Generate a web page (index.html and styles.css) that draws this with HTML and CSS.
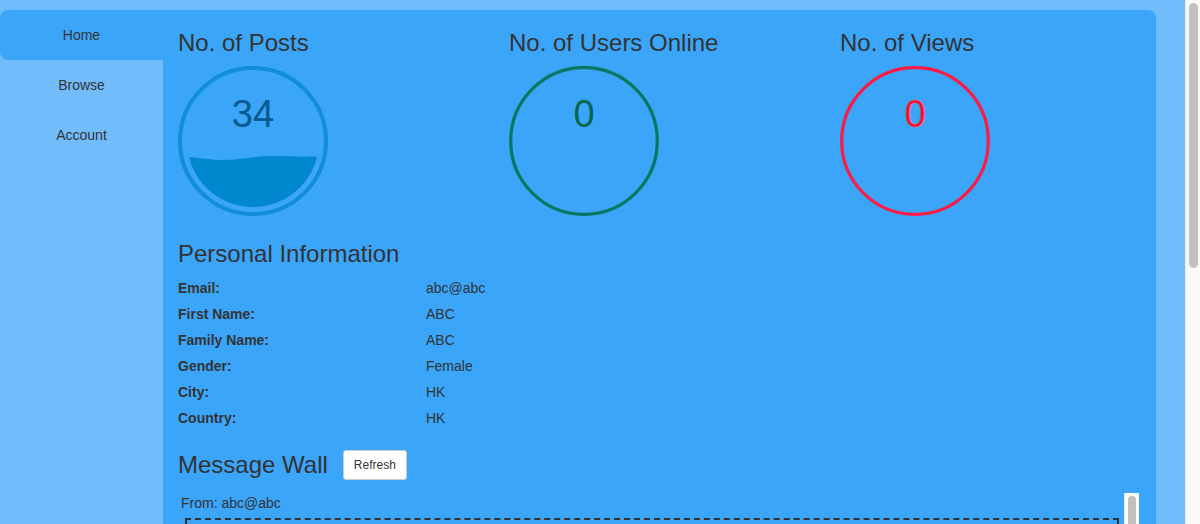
FILE: index.html
```html
<!DOCTYPE html>
<html lang="en">
<head>
<meta charset="utf-8">
<title>Dashboard</title>
<link rel="stylesheet" href="styles.css">
</head>
<body>
<div class="layout">
  <nav class="sidebar">
    <a class="nav-item active">Home</a>
    <a class="nav-item">Browse</a>
    <a class="nav-item">Account</a>
  </nav>
  <main class="panel">
    <section class="stats">
      <div class="stat">
        <h3 class="title">No. of Posts</h3>
        <svg class="gauge" width="150" height="150" viewBox="0 0 150 150">
          <defs>
            <clipPath id="inner"><circle cx="75" cy="75" r="66"/></clipPath>
          </defs>
          <circle cx="75" cy="75" r="73" fill="none" stroke="#118ed6" stroke-width="4"/>
          <path clip-path="url(#inner)" fill="#0087ce" d="M0,91 C15,90 30,94 45,94 C62,94 78,90 95,90 C115,90 130,91 150,91 L150,150 L0,150 Z"/>
          <text x="75" y="61" class="gauge-text posts">34</text>
        </svg>
      </div>
      <div class="stat">
        <h3 class="title">No. of Users Online</h3>
        <svg class="gauge" width="150" height="150" viewBox="0 0 150 150">
          <circle cx="75" cy="75" r="73.3" fill="none" stroke="#06775e" stroke-width="3.2"/>
          <text x="75" y="61" class="gauge-text users">0</text>
        </svg>
      </div>
      <div class="stat">
        <h3 class="title">No. of Views</h3>
        <svg class="gauge" width="150" height="150" viewBox="0 0 150 150">
          <circle cx="75" cy="75" r="73.3" fill="none" stroke="#fd1a44" stroke-width="3.2"/>
          <text x="75" y="61" class="gauge-text views">0</text>
        </svg>
      </div>
    </section>

    <section class="info">
      <h3 class="title">Personal Information</h3>
      <div class="info-grid">
        <div class="label">Email:</div><div class="value">abc@abc</div>
        <div class="label">First Name:</div><div class="value">ABC</div>
        <div class="label">Family Name:</div><div class="value">ABC</div>
        <div class="label">Gender:</div><div class="value">Female</div>
        <div class="label">City:</div><div class="value">HK</div>
        <div class="label">Country:</div><div class="value">HK</div>
      </div>
    </section>

    <section class="wall">
      <div class="wall-head">
        <h3 class="title">Message Wall</h3>
        <button class="btn">Refresh</button>
      </div>
      <div class="wall-scroll">
        <div class="wall-content">
          <div class="from">From: abc@abc</div>
          <div class="message"></div>
        </div>
        <div class="scrollbar inner-bar"><div class="thumb inner-thumb"></div></div>
      </div>
    </section>
  </main>
</div>
<div class="scrollbar page-bar"><div class="thumb page-thumb"></div></div>
</body>
</html>
```

FILE: styles.css
```css
html {
  scrollbar-width: none;
}

body {
  margin: 0;
  background: #71bcfb;
  font-family: "Liberation Sans", Arial, Helvetica, sans-serif;
  font-size: 14px;
  line-height: 20px;
  color: #333;
}

.layout {
  display: flex;
  width: 1156px;
  margin-top: 10px;
}

.sidebar {
  width: 163px;
  flex: none;
  display: flex;
  flex-direction: column;
}

.nav-item {
  display: block;
  height: 50px;
  line-height: 50px;
  text-align: center;
  color: #333;
  font-size: 14px;
  cursor: pointer;
}

.nav-item.active {
  background: #3aa5f9;
  border-radius: 8px 0 0 8px;
}

.panel {
  flex: 1;
  background: #3aa5f9;
  border-radius: 0 8px 0 0;
  padding: 0 0 24px;
}

.title {
  margin: 20px 0 10px;
  font-size: 24px;
  font-weight: normal;
  line-height: 1.1;
  color: #333;
}

.stats {
  display: grid;
  grid-template-columns: repeat(3, 1fr);
}

.stat {
  padding: 0 15px;
}

.gauge {
  display: block;
}

.gauge-text {
  font-family: "Liberation Sans", Arial, sans-serif;
  font-size: 38px;
  text-anchor: middle;
}

.gauge-text.posts { fill: #045a8c; }
.gauge-text.users { fill: #05664f; }
.gauge-text.views { fill: #ff0a1e; stroke: #ff5c8a; stroke-width: 0.4; }

.info {
  padding: 0 15px;
  margin-top: 25px;
}

.info-grid {
  display: grid;
  grid-template-columns: 248px 1fr;
}

.label,
.value {
  padding: 0 0 6px;
  line-height: 20px;
}

.label {
  font-weight: bold;
}

.wall {
  padding: 0 15px;
}

.wall-head {
  display: flex;
  align-items: center;
  gap: 15px;
  margin-top: 16px;
}

.wall-head .title {
  margin: 0;
}

.btn {
  font-family: "Liberation Sans", Arial, sans-serif;
  font-size: 12px;
  line-height: 18px;
  padding: 5px 10px;
  background: #fff;
  color: #333;
  border: 1px solid #ccc;
  border-radius: 3px;
}

.wall-scroll {
  position: relative;
  margin-top: 13px;
  width: 961px;
  height: 520px;
  overflow: hidden;
}

.wall-content {
  padding: 0 15px 0 3px;
}

.from {
  line-height: 20px;
}

.message {
  margin: 5px 5px 0 4px;
  height: 640px;
  border: 2px dashed #333;
}

.scrollbar {
  background: #fafafa;
  border-left: 1px solid #ececec;
  box-sizing: border-box;
  width: 15px;
}

.thumb {
  background: #c1c1c1;
  border-radius: 5px;
  width: 9px;
  position: absolute;
  left: 3px;
  top: 3px;
}

.inner-bar {
  position: absolute;
  right: 0;
  top: 0;
  height: 100%;
}

.inner-thumb {
  height: 400px;
  width: 8px;
  left: 3px;
}

.page-bar {
  position: fixed;
  right: 0;
  top: 0;
  height: 100vh;
}

.page-thumb {
  height: 265px;
}
```
